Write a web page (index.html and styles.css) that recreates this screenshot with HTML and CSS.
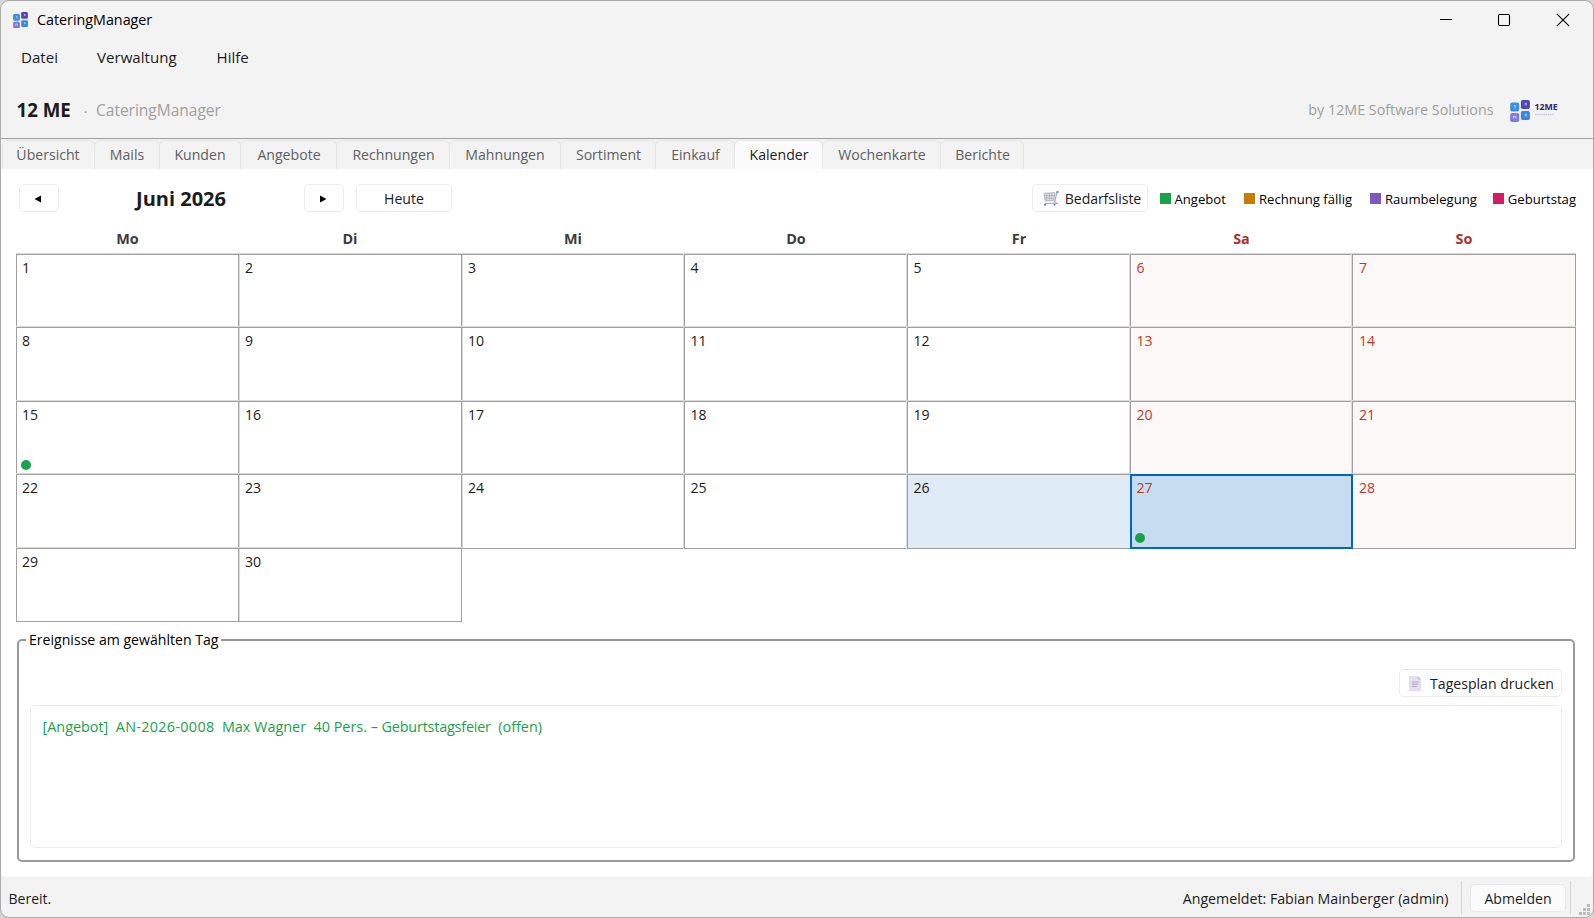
FILE: index.html
```
<!DOCTYPE html>
<html lang="de">
<head>
<meta charset="utf-8">
<title>CateringManager</title>
<link rel="stylesheet" href="styles.css">
</head>
<body>
<svg class="defs" width="0" height="0">
  <symbol id="tiles" viewBox="0 0 20 22">
    <rect x="0.2" y="2.6" width="9" height="9" rx="1.8" fill="#3b8ee3"/>
    <rect x="10.9" y="0" width="9" height="9" rx="1.8" fill="#5546b8"/>
    <rect x="0.2" y="13" width="9" height="9" rx="1.8" fill="#8577e0"/>
    <rect x="10.9" y="11" width="9" height="9" rx="1.8" fill="#3589de"/>
    <g stroke="#fff" stroke-opacity=".6" stroke-width="1.1" fill="none">
      <path d="M4.2 5.6h1v3M14.6 3.2h1.6v1.6h-1.4M3.6 18.2v-2h2.2v2M14.6 14.2h1.6v1.6h-1.4"/>
    </g>
  </symbol>
</svg>
<div class="window">
  <header class="titlebar">
    <svg class="app-icon"><use href="#tiles"/></svg>
    <span class="app-title">CateringManager</span>
    <div class="window-buttons">
      <svg viewBox="0 0 14 14"><path d="M1 6.5h12"/></svg>
      <svg viewBox="0 0 14 14"><rect x="1.5" y="1.5" width="11" height="11" rx="1.2"/></svg>
      <svg viewBox="0 0 14 14"><path d="M0.8 0.8l12.4 12.4M13.2 0.8L0.8 13.2"/></svg>
    </div>
  </header>
  <nav class="menubar"><span>Datei</span><span>Verwaltung</span><span>Hilfe</span></nav>
  <div class="brand">
    <strong>12 ME</strong><span class="dot">·</span><span class="product">CateringManager</span>
    <span class="vendor">by 12ME Software Solutions</span>
    <svg class="logo-mark"><use href="#tiles"/></svg>
    <div class="logo-text"><b>12ME</b><svg viewBox="0 0 20 3"><path d="M0 1.5h19" /></svg></div>
  </div>
  <div class="tabs">
    <span>Übersicht</span><span>Mails</span><span>Kunden</span><span>Angebote</span><span>Rechnungen</span><span>Mahnungen</span><span>Sortiment</span><span>Einkauf</span><span class="active">Kalender</span><span>Wochenkarte</span><span>Berichte</span>
  </div>
  <main class="pane">
    <div class="toolbar">
      <button class="nav"><svg viewBox="0 0 8 8"><path d="M7 0.5v7L0.5 4z"/></svg></button>
      <h1>Juni 2026</h1>
      <button class="nav"><svg viewBox="0 0 8 8"><path d="M1 0.5v7L7.5 4z"/></svg></button>
      <button class="today-btn"><span>Heute</span></button>
      <button class="needs-btn">
        <svg viewBox="0 0 16 16">
          <path d="M1 2.2L12 1.8 10.6 9.6 2 9.8z" fill="#e6e4ea" stroke="#b0adb8" stroke-width=".9"/>
          <path d="M3.7 2v7.6M6.3 2v7.6M8.9 2v7.6M1.2 4.6h10.5M1.5 7.2h9.8" stroke="#a9a6b2" stroke-width=".7"/>
          <path d="M14 1.3L11.6 10.5 13.8 12.4H1.5" fill="none" stroke="#b4adc0" stroke-width="1.3"/>
          <path d="M13.4 1h2.2" stroke="#3f74c9" stroke-width="1.3"/>
          <circle cx="2" cy="13.8" r="1" fill="#5a7fcb"/><circle cx="11.5" cy="13.8" r="1" fill="#5a7fcb"/>
        </svg>
        <span>Bedarfsliste</span>
      </button>
      <div class="legend">
        <span class="offer">Angebot</span><span class="invoice">Rechnung fällig</span><span class="room">Raumbelegung</span><span class="birthday">Geburtstag</span>
      </div>
    </div>
    <div class="weekdays"><span>Mo</span><span>Di</span><span>Mi</span><span>Do</span><span>Fr</span><span class="we">Sa</span><span class="we">So</span></div>
    <div class="month">
      <div>1</div><div>2</div><div>3</div><div>4</div><div>5</div><div class="we">6</div><div class="we">7</div>
      <div>8</div><div>9</div><div>10</div><div>11</div><div>12</div><div class="we">13</div><div class="we">14</div>
      <div>15<i></i></div><div>16</div><div>17</div><div>18</div><div>19</div><div class="we">20</div><div class="we">21</div>
      <div>22</div><div>23</div><div>24</div><div>25</div><div class="today">26</div><div class="we selected">27<i></i></div><div class="we">28</div>
      <div>29</div><div>30</div>
    </div>
    <fieldset class="events">
      <legend>Ereignisse am gewählten Tag</legend>
      <button class="print-btn">
        <svg viewBox="0 0 12 15"><path d="M0 0h8.5L12 3.5V15H0z" fill="#e6def0"/><path d="M8.5 0v3.5H12z" fill="#c5bcd2"/><path d="M3 6h6.5M3 8.2h6.5M3 10.4h5" stroke="#b3a9c0" stroke-width="1"/></svg>
        <span>Tagesplan drucken</span>
      </button>
      <div class="event-list"><div>[Angebot]  <span class="number">AN-2026-0008</span>  Max Wagner  40 Pers. – <span class="occasion">Geburtstagsfeier</span>  (offen)</div></div>
    </fieldset>
  </main>
  <footer class="statusbar">
    <span class="message">Bereit.</span>
    <span class="user">Angemeldet: Fabian Mainberger (admin)</span>
    <div class="logout"><button><span>Abmelden</span></button></div>
    <svg class="grip" viewBox="0 0 11 11"><path d="M8 0h3v3H8zM8 4h3v3H8zM8 8h3v3H8zM4 4h3v3H4zM4 8h3v3H4zM0 8h3v3H0z"/></svg>
  </footer>
</div>
</body>
</html>
```
FILE: styles.css
```
* { box-sizing: border-box; }
body {
  margin: 0;
  height: 918px;
  overflow: hidden;
  background: #d6d6d6;
  font: 14.1px/20px "Open Sans", "Noto Sans", sans-serif;
  color: #1b1b1b;
}
.defs { display: block; }
.window {
  display: flex;
  flex-direction: column;
  width: 1594px;
  height: 918px;
  border: 1px solid #ababab;
  border-radius: 9px;
  background: #f3f3f3;
  overflow: hidden;
}

.titlebar { display: flex; align-items: center; height: 37px; padding: 1px 0 0 11.5px; }
.app-icon { width: 15px; height: 16.5px; }
.app-title { margin-left: 9.5px; font-size: 14.3px; color: #000; }
.window-buttons { display: flex; margin-left: auto; padding-right: 23.5px; gap: 44.5px; }
.window-buttons svg { width: 14px; height: 14px; fill: none; stroke: #000; stroke-width: 1.1; }

.menubar { display: flex; height: 39px; padding-left: 20px; font-size: 15.1px; line-height: 39px; }
.menubar span:nth-child(1) { width: 76px; }
.menubar span:nth-child(2) { width: 119.5px; }

.brand {
  display: flex;
  align-items: center;
  height: 62px;
  padding: 5px 0 0 15.5px;
  border-bottom: 1px solid #a0a0a0;
  color: #a0a0a0;
}
.brand strong { width: 67px; font-size: 18.7px; color: #1b1b1b; }
.dot { width: 12.5px; padding-top: 1px; font-size: 15px; }
.product { font-size: 15.5px; }
.vendor { margin-left: auto; font-size: 14.3px; }
.logo-mark { width: 20px; height: 22px; margin: 2px 0 0 16px; }
.logo-text { width: 63.5px; padding-left: 5px; margin-top: -2px; }
.logo-text b { display: block; font-size: 8.8px; line-height: 11px; color: #33265f; }
.logo-text svg { display: block; width: 20px; height: 3px; margin-top: 0; }
.logo-text path { stroke: #d0c4f0; stroke-width: 1.6; stroke-dasharray: 1.6 .5; }

.tabs { display: flex; height: 30px; padding: 1px 0 0 1px; color: #606060; }
.tabs span {
  margin-right: -1px;
  border: 1px solid #e5e5e5;
  border-bottom: 0;
  border-radius: 6px 6px 0 0;
  text-align: center;
  line-height: 28px;
}
.tabs span:nth-child(1) { width: 93px; padding-right: 1px; }
.tabs span:nth-child(2) { width: 66px; }
.tabs span:nth-child(3) { width: 82px; }
.tabs span:nth-child(4) { width: 97px; padding-left: 1px; }
.tabs span:nth-child(5) { width: 114px; padding-left: 1px; }
.tabs span:nth-child(6) { width: 112px; }
.tabs span:nth-child(7) { width: 96px; padding-left: 1px; }
.tabs span:nth-child(8) { width: 80px; padding-left: 1px; }
.tabs span:nth-child(9) { width: 89px; padding-left: 1px; }
.tabs span:nth-child(10) { width: 119px; padding-left: 1px; }
.tabs span:nth-child(11) { width: 84px; padding-left: 1px; }
.tabs .active { background: #fbfbfb; color: #1b1b1b; }

.pane {
  flex: none;
  height: 708px;
  padding: 15px 17px 0 15px;
  background: #fff;
  border-radius: 0 0 5px 5px;
}
button {
  display: flex;
  align-items: center;
  justify-content: center;
  height: 28px;
  padding: 0;
  border: 1px solid #ececec;
  border-radius: 5px;
  background: #fff;
  font: inherit;
  color: inherit;
}
button span { padding-top: 2px; }
.toolbar { display: flex; align-items: center; padding-left: 2.5px; }
.nav { width: 40px; }
.nav svg { width: 8px; height: 8px; margin: 1px 1px 0 0; }
.toolbar h1 { width: 245px; margin: 0; text-align: center; font-size: 20px; line-height: 28px; padding-top: 1px; margin-bottom: -1px; }
.today-btn { width: 96px; margin-left: 12.5px; }
.needs-btn { width: 116px; margin-left: auto; padding-left: 3px; }
.needs-btn svg { width: 16px; height: 16px; margin: 2px 6px 0 1px; }
.needs-btn span { letter-spacing: -0.1px; }
.legend { display: flex; margin: 2px 0 0 11.5px; font-size: 13.1px; color: #000; }
.legend span { display: flex; align-items: center; }
.legend span::before { content: ""; width: 11px; height: 11px; margin: -1px 4px 0 0; }
.legend .offer { width: 84.5px; }
.legend .invoice { width: 126px; }
.legend .room { width: 123px; }
.legend .birthday { width: 83px; }
.legend .offer::before { background: #16a34a; }
.legend .invoice::before { background: #c97a00; }
.legend .room::before { background: #7e57c2; }
.legend .birthday::before { background: #d81b60; }

.weekdays, .month { display: grid; grid-template-columns: 222px 223px 223px 223px 223px 222px 223px; }
.weekdays { padding-top: 16px; height: 42px; text-align: center; font-size: 14.4px; font-weight: bold; color: #3c3c3c; line-height: 22px; }
.weekdays span { padding-left: 1px; }
.weekdays .we { color: #b03028; }
.month { grid-template-rows: 73px 74px 73px 74px 73px; }
.month div {
  position: relative;
  margin: 0 -1px -1px 0;
  padding: 3px 0 0 5.5px;
  border: 1px solid #a0a0a0;
  box-shadow: 0 -1px #dadada, -1px 0 #dadada;
  background: #fff;
}
.month div:nth-child(7n+1) { box-shadow: 0 -1px #dadada; padding-left: 5px; }
.month div:nth-child(7n+2), .month div:nth-child(7n+3) { box-shadow: 0 -1px #dadada, inset 1px 0 #dadada; padding-left: 6px; }
.month div:nth-child(7n) { padding-left: 6px; }
.month .we { background: #fcf8f7; color: #c0392b; }
.month .today { background: #dfebf5; }
.month .selected {
  z-index: 1;
  padding: 2px 0 0 4.5px;
  border: 2px solid #0067c0;
  box-shadow: none !important;
  background: #c7dcf0;
}
.month i {
  position: absolute;
  left: 4px;
  bottom: 4px;
  width: 10px;
  height: 10px;
  border-radius: 50%;
  background: #16a34a;
}
.month .selected i { left: 3px; bottom: 4px; }

.events {
  margin: 9px 1px 0;
  height: 232px;
  padding: 19px 11px 0;
  border: 2px solid #9a9a9a;
  border-radius: 5px;
}
.events legend { margin-left: -4px; padding: 0 3px; color: #000; }
.print-btn { width: 163px; margin-left: auto; padding-left: 2px; }
.print-btn svg { width: 12px; height: 15px; margin: 1px 9px 0 0; }
.event-list {
  height: 143px;
  margin-top: 8px;
  padding: 11px 11.5px;
  border: 1px solid #ececec;
  border-radius: 5px;
  white-space: pre;
  font-size: 14.4px;
  color: #16a34a;
}
.number { letter-spacing: 0.3px; }
.occasion { letter-spacing: -0.2px; }

.statusbar { display: flex; flex: none; height: 40px; padding-left: 7.5px; }
.message { padding-top: 12px; font-size: 14px; }
.user { margin-left: auto; padding-top: 12px; font-size: 14.2px; }
.logout {
  width: 110px;
  height: 34px;
  margin: 4px 0 0 12.5px;
  padding: 3px 4px 0 8px;
  border: solid #d5d5d5;
  border-width: 0 1px;
}
.logout button { width: 96px; background: #fbfbfb; border-color: #e8e8e8; }
.grip { align-self: flex-end; width: 11px; height: 11px; margin: 0 3px 2px 8px; fill: #bcbcbc; }
```
